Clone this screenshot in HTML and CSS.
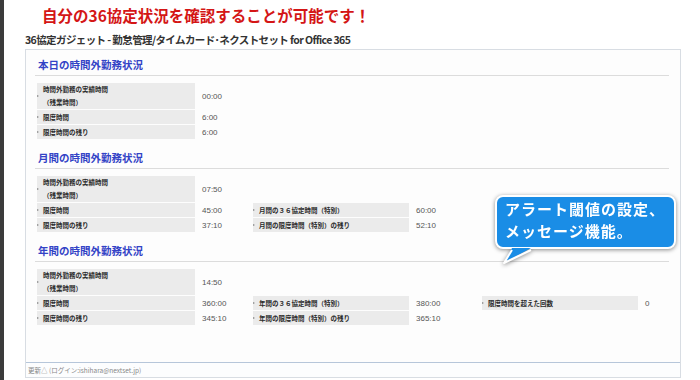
FILE: index.html
```html
<!DOCTYPE html>
<html lang="ja">
<head>
<meta charset="utf-8">
<title>36協定ガジェット</title>
<link rel="stylesheet" href="styles.css">
</head>
<body>
<h1 class="promo">自分の36協定状況を確認することが可能です！</h1>
<div class="gadget-title">36協定ガジェット - 勤怠管理/タイムカード･ネクストセット for Office 365</div>

<div class="panel">
  <div class="panel-body">
    <section class="block first">
      <h2>本日の時間外勤務状況</h2>
      <div class="grid">
        <div class="label tall"><span>時間外勤務の実績時間<br>（残業時間）</span></div>
        <div class="value tall">00:00</div>
        <div class="label r2"><span>限度時間</span></div>
        <div class="value r2">6:00</div>
        <div class="label r3"><span>限度時間の残り</span></div>
        <div class="value r3">6:00</div>
      </div>
    </section>

    <section class="block">
      <h2>月間の時間外勤務状況</h2>
      <div class="grid">
        <div class="label tall"><span>時間外勤務の実績時間<br>（残業時間）</span></div>
        <div class="value tall">07:50</div>
        <div class="label r2"><span>限度時間</span></div>
        <div class="value r2">45:00</div>
        <div class="label r2 c2"><span>月間の３６協定時間（特別）</span></div>
        <div class="value r2 c2">60:00</div>
        <div class="label r3"><span>限度時間の残り</span></div>
        <div class="value r3">37:10</div>
        <div class="label r3 c2"><span>月間の限度時間（特別）の残り</span></div>
        <div class="value r3 c2">52:10</div>
      </div>
    </section>

    <section class="block">
      <h2>年間の時間外勤務状況</h2>
      <div class="grid">
        <div class="label tall"><span>時間外勤務の実績時間<br>（残業時間）</span></div>
        <div class="value tall">14:50</div>
        <div class="label r2"><span>限度時間</span></div>
        <div class="value r2">360:00</div>
        <div class="label r2 c2"><span>年間の３６協定時間（特別）</span></div>
        <div class="value r2 c2">380:00</div>
        <div class="label r2 c3"><span>限度時間を超えた回数</span></div>
        <div class="value r2 c3">0</div>
        <div class="label r3"><span>限度時間の残り</span></div>
        <div class="value r3">345:10</div>
        <div class="label r3 c2"><span>年間の限度時間（特別）の残り</span></div>
        <div class="value r3 c2">365:10</div>
      </div>
    </section>
  </div>
  <div class="panel-footer">更新△ (ログイン:ishihara@nextset.jp)</div>
</div>

<div class="callout">
  <div class="callout-box">アラート閾値の設定、<br>メッセージ機能。</div>
  <svg class="callout-tail" width="40" height="18" viewBox="0 0 40 18">
    <polygon points="17,0 9,15 36,0" fill="#1a8de6"/>
    <polyline points="17,2 9,15 36,2" fill="none" stroke="#fff" stroke-width="2" stroke-linejoin="round"/>
  </svg>
</div>
</body>
</html>
```

FILE: styles.css
```css
body {
	margin: 0;
	min-height: 380px;
	border-left: 4px solid #3b3b3b;
	background: #fff;
	font-family: "Noto Sans CJK JP", "Liberation Sans", sans-serif;
	color: #333;
}

.promo {
	margin: 5px 0 0 38px;
	font-size: 15.5px;
	line-height: 20px;
	font-weight: bold;
	color: #d41616;
}

.gadget-title {
	margin: 8px 0 0 21px;
	font-size: 10.5px;
	line-height: 14px;
	font-weight: bold;
	letter-spacing: -0.6px;
	color: #333;
}

.panel {
	margin: 2px 0 0 21px;
	width: 656px;
	height: 329px;
	box-sizing: border-box;
	border: 1px solid #d8dde3;
	background: #fdfdfd;
	display: flex;
	flex-direction: column;
}

.panel-body {
	flex: 1;
	padding: 5px 11px 0 9px;
}

.block {
	margin-top: 9px;
}

.block.first {
	margin-top: 0;
}

h2 {
	margin: 0;
	height: 20px;
	padding-left: 3px;
	font-size: 10.5px;
	line-height: 20px;
	font-weight: bold;
	color: #3343c6;
	border-bottom: 1px solid #dcdcdc;
}

.grid {
	margin: 7px 0 0 2px;
	display: grid;
	grid-template-columns: 158px 58px 156px 73px 156px 40px;
	grid-template-rows: 26px 14px 14px;
	row-gap: 1px;
}

.label {
	grid-column: 1;
	display: flex;
	align-items: center;
	background: #ebebeb;
	font-size: 6.5px;
	line-height: 13px;
	font-weight: bold;
	color: #2a2a2a;
}

.label::before {
	content: "";
	flex: none;
	width: 0;
	height: 0;
	margin-right: 4px;
	border-left: 2px solid #888;
	border-top: 1.5px solid transparent;
	border-bottom: 1.5px solid transparent;
}

.value {
	grid-column: 2;
	display: flex;
	align-items: center;
	padding-left: 7px;
	font-family: "Liberation Sans", sans-serif;
	font-size: 8px;
	color: #555;
}

.tall { grid-row: 1; }
.r2 { grid-row: 2; }
.r3 { grid-row: 3; }

.label.c2 { grid-column: 3; }
.value.c2 { grid-column: 4; }
.label.c3 { grid-column: 5; }
.value.c3 { grid-column: 6; }

.panel-footer {
	height: 14px;
	border-top: 1px solid #b6c6da;
	padding-left: 2px;
	font-size: 6.5px;
	line-height: 14px;
	color: #888;
	background: #fcfdfe;
}

.callout {
	position: absolute;
	left: 495px;
	top: 195px;
	filter: drop-shadow(0 1px 2px rgba(0, 0, 0, 0.45));
}

.callout-box {
	width: 169px;
	height: 49px;
	padding: 1px 0 0 8px;
	border: 2px solid #fff;
	border-radius: 8px;
	background: #1a8de6;
	color: #fff;
	font-size: 15px;
	line-height: 22px;
	letter-spacing: 1px;
	font-weight: bold;
}

.callout-tail {
	position: absolute;
	left: 0;
	top: 53px;
	display: block;
}
```
